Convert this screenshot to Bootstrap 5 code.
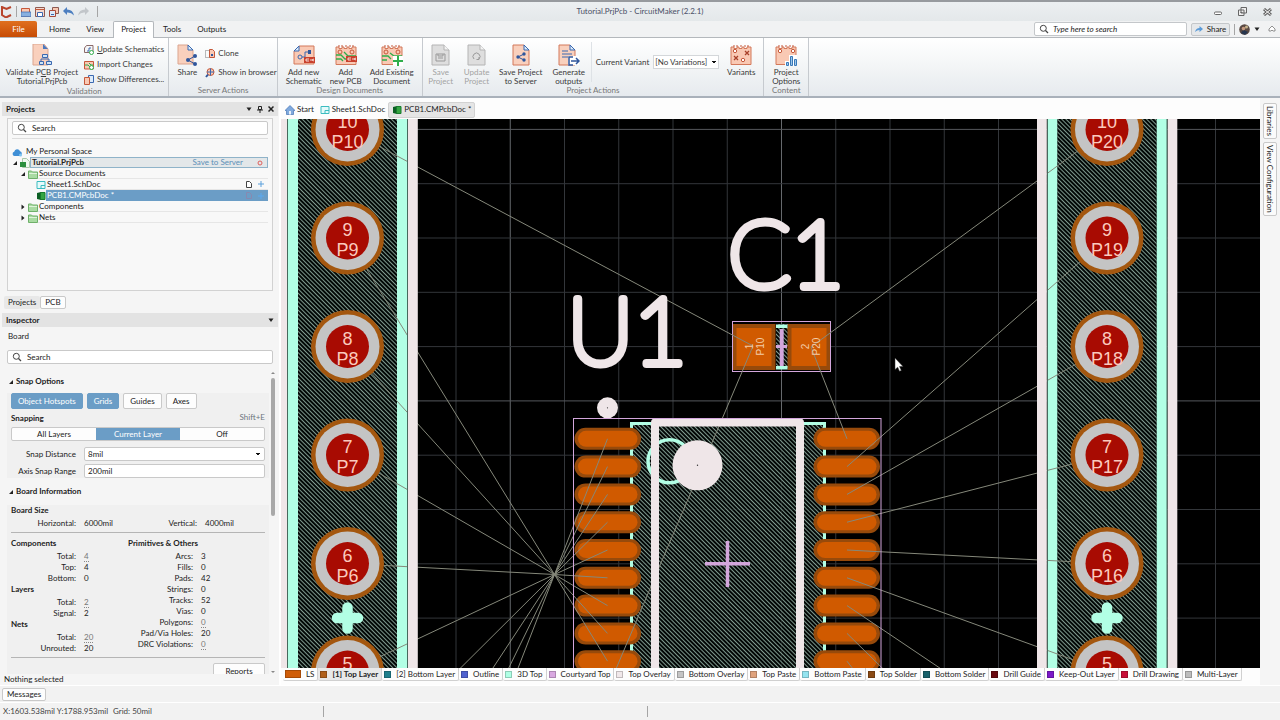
<!DOCTYPE html>
<html lang="en">
<head>
<meta charset="utf-8">
<meta name="viewport" content="width=device-width, initial-scale=1">
<title>Tutorial.PrjPcb - CircuitMaker (2.2.1)</title>
<link href="https://cdn.jsdelivr.net/npm/bootstrap@5.3.0/dist/css/bootstrap.min.css" rel="stylesheet">
<style>
  :root { --ink:#222; --blue:#6b9dc6; --line:#c9c9c9; --accent:#d2560a; }
  body { font-family:Lato,"Open Sans",sans-serif; font-size:8px; line-height:9px; color:var(--ink); background:#f4f4f4; white-space:nowrap; }
  button, input, select { font:inherit; color:inherit; border-radius:2px; }
  button { background:none; border:0; padding:0; }
  a { color:inherit; text-decoration:none; }
  svg { flex:none; }
  h2, h3, h4, p, ul { font-size:8px; line-height:11px; margin:0; padding:0; font-weight:700; }
  .i9 { width:10px; height:10px; } .i22 { width:22px; height:22px; }

  .title-bar { height:21px; background:linear-gradient(#eceff1,#e4e8ea); border-top:2px solid #979a9e; }
  .title-bar .caption { color:#4a4f66; }
  .menu-row { height:17px; background:#f1f2f3; border-bottom:1px solid #b4b8bc; }
  .menu-row .menu-tab { height:17px; padding:0 7px; margin-right:2px; }
  .menu-row .menu-tab.on { background:#fff; border:1px solid #b4b8bc; border-bottom:0; border-radius:2px 2px 0 0; }
  .file-tab { width:37px; height:16px; color:#fff; background:linear-gradient(#e0701f,#c74c05); border-radius:0 2px 0 0; margin-right:5px; }
  .find-box { width:153px; height:14px; border:1px solid #c4c7ca; background:#fff; border-radius:2px; }
  .find-box input, .field input { border:0; outline:0; background:transparent; padding:0; min-width:0; flex:1; }
  .field input::placeholder, .find-box input::placeholder { color:#222; opacity:1; }
  .share-btn { width:39px; height:13px; border:1px solid #c4c7ca; background:#e6e8ea; }

  .ribbon { height:60px; background:linear-gradient(#fff,#f4f6f7 45%,#e6eaee); border-bottom:2px solid #a9b1ba; }
  .ribbon-group { border-right:1px solid #c6cacf; color:#3a3a3a; }
  .ribbon-group footer { color:#777; height:10px; text-align:center; }
  .big-cmd { display:flex; flex-direction:column; align-items:center; padding-top:6px; gap:2px; }
  .cmd-gap { gap:2px; }
  .w36 { width:36px; } .w44 { width:44px; } .w52 { width:52px; } .w84 { width:84px; }
  .small-cmd { display:flex; align-items:center; gap:3px; height:15px; }
  .disabled-look { color:#a3a3a3; }
  .with-caret { background-image:linear-gradient(45deg,transparent 50%,#111 50%),linear-gradient(-45deg,transparent 50%,#111 50%); background-size:3px 3px; background-position:right 6px center,right 3px center; background-repeat:no-repeat; }
  .variant-box { width:66px; height:14px; border:1px solid #d4d7da; background-color:#fff; appearance:none; padding:0 1px; border-radius:0; background-size:2px 2px; background-position:right 4px center,right 2px center; }

  .side { width:281px; background:#f5f5f5; border-right:2px solid #fff; }
  .panel-head { height:14px; background:#e3e3e3; padding:0 4px; margin:0 1px 0 2px; gap:5px; flex:none; }
  .tree-box { border:1px solid #d2d2d2; height:173px; flex:none; margin:2px 6px 5px 7px; padding:2px 4px; background:#f8f8f8; }
  .field { height:14px; border:1px solid #c9c9c9; background-color:#fff; border-radius:2px; display:flex; align-items:center; gap:5px; padding:0 4px; }
  .field.inset { margin:0 6px 0 7px; }
  .tree-row { height:11px; display:flex; align-items:center; font-weight:400; }
  .tree-row .cell { flex:1; display:flex; align-items:center; height:11px; border-bottom:1px solid #e6e6e6; padding-left:1px; gap:6px; }
  .tree-row .cell.proj { background:#e3e7e9; border:1px solid #8fb3c9; }
  .tree-row .cell.picked { background:var(--blue); color:#fff; border:0; }
  .twig { width:6px; height:6px; margin-right:2px; }
  .page-tab { height:13px; padding:0 4px; border-radius:2px; }
  .page-tab.flat { background:#e8e8e8; }
  .page-tab.raised { border:1px solid var(--line); background:#fdfdfd; }

  .props { background:#f0f0f0; margin:0 10px 0 7px; padding:0 4px; }
  .sect { padding:12px 8px 6px; }
  .sect.tight { padding:5px 8px 8px; }
  .pill { height:16px; padding:0 6px; border:1px solid #c9c9c9; background:#fdfdfd; }
  .pill.on, .seg button.on { background:var(--blue); border-color:var(--blue); color:#fff; }
  .seg { border:1px solid #c9c9c9; border-radius:2px; background:#fdfdfd; height:14px; margin:3px 0 6px; }
  .seg button { flex:1; border-radius:0; }
  .prop-line { display:grid; grid-template-columns:65px 1fr; column-gap:8px; align-items:center; margin-bottom:3px; }
  .prop-line label { text-align:right; }
  .prop-line .field { padding:0 3px; width:100%; }
  select.field { appearance:none; }
  .stats { display:grid; grid-template-columns:65px 36px 1fr 60px; column-gap:8px; line-height:11px; padding-top:2px; }
  .stat-table { border-collapse:collapse; }
  .stat-table.drop { margin-top:2px; }
  .stat-table td, .stat-table th { padding:0; height:11px; line-height:11px; font-weight:400; }
  .stat-table th { text-align:right; width:73px; padding-right:8px; }
  .rule { border-top:1px solid #b5b5b5; margin:3px 0 5px; }
  .rule.faint { border-color:#ddd; margin-bottom:7px; }
  .dotted { border-bottom:1px dotted #888; color:#777; }
  .thumb { right:4px; width:4px; height:138px; background:#a9a9a9; border-radius:2px; }
  .arrow-mark { right:3px; width:6px; height:4px; }

  .doc-tabs { height:21px; flex:none; background:#fdfdfd; padding:2px 0 0 4px; }
  .doc-tab { height:16px; display:flex; align-items:center; gap:2px; padding:0 3px; }
  .doc-tab.on { background:#e5e5e5; border:1px solid #d2d2d2; border-radius:2px; }
  .board { background:#000; min-height:0; }
  .board svg { width:100%; height:100%; display:block; }
  .layer-tabs { height:17px; flex:none; background:#fdfdfd; padding-left:2px; }
  .layer { height:13px; display:flex; align-items:center; padding:0 3px 0 2px; gap:5px; border-right:1px solid #d0d0d0; border-bottom:1px solid #d0d0d0; border-radius:0 0 2px 2px; }
  .layer.on { background:#e9e9e9; font-weight:700; }
  .chip { width:7px; height:7px; border:1px solid #0003; }
  .chip.wide { width:16px; height:8px; }
  .edge { width:20px; background:#f5f5f5; padding:5px 3px 0; display:flex; flex-direction:column; gap:3px; }
  .edge button { writing-mode:vertical-rl; width:14px; padding:2px 0; border:1px solid #c9c9c9; background:#fbfbfb; line-height:12px; }
  .msg-row { height:18px; flex:none; padding-left:2px; background:#f2f2f2; border-bottom:1px solid #fff; border-top:1px solid #fff; }
  .status { height:17px; flex:none; padding-left:3px; background:#f2f2f2; color:#444; }
  .tick-mark { width:1px; height:11px; background:#a5a5a5; }
</style>
</head>
<body class="d-flex flex-column vh-100 overflow-hidden">

<svg width="0" height="0" class="position-absolute" aria-hidden="true">
  <defs>
    <symbol id="brd" viewBox="0 0 22 22"><path d="M1 3h3v1.500h3V3h2v1.500h3V3h2v1.500h3V3h4v17.500H1z" fill="#f9c9b4" stroke="#d3785a"/><path d="M4 1v2m3-2v2m4-2v2m4-2v2m3-2v2" stroke="#c5583a"/></symbol>
    <symbol id="validate" viewBox="0 0 22 22"><path d="M2 0h11l4 5v16H2z" fill="#f9d0bd" stroke="#dba58f"/><path d="M12 0v5h5z" fill="#4d79bd"/><path d="M14 14v-1m-4 4v-2h8v2" stroke="#3a68b0" fill="none"/><path d="M11.500 10.500h5v3h-5zM8.500 17.500h4v3h-4zM15.500 17.500h5v3h-5z" fill="#cfe4f7" stroke="#3a68b0"/></symbol>
    <symbol id="share" viewBox="0 0 22 22"><path d="M2 1h10l5 5v14H2z" fill="#f9d0bd" stroke="#dba58f"/><path d="M12 1v5h5z" fill="#dcebfa" stroke="#3a68b0"/><path d="m12 16 7-4m-7 4 7 4" stroke="#2f569c"/><circle cx="12" cy="16" r="2" fill="#2f569c"/><circle cx="19" cy="12" r="2" fill="#2f569c"/><circle cx="19" cy="20" r="2" fill="#2f569c"/></symbol>
    <symbol id="sch" viewBox="0 0 22 22"><path d="M6 2h15v18H1V7z" fill="#f9c9b4" stroke="#d3785a"/><path d="M1 7h5V2z" fill="#dcebfa" stroke="#3a68b0"/><circle cx="7" cy="13" r="2" fill="none" stroke="#3a68b0"/><path d="M9 13h3V8h3" fill="none" stroke="#3a68b0"/><path d="M15 6h3v4h-3z" fill="#2f569c"/><path d="M11 13h11v6H11z" fill="#c9402c"/><path d="M16 15h-3v2h3m2-2v2m3-2-2 1 2 1" stroke="#fff" stroke-width=".8" fill="none"/></symbol>
    <symbol id="pcb" viewBox="0 0 22 22"><use href="#brd"/><circle cx="5" cy="8" r="2" fill="none" stroke="#c5583a"/><circle cx="17" cy="8" r="2" fill="none" stroke="#c5583a"/><path d="M1 11h5l4 4h5m-14 0h5l2 2M9 8l4 4h8" fill="none" stroke="#2fae4b" stroke-width="1.300"/><path d="M11 12h11v6H11z" fill="#c9402c"/><path d="M16 14h-3v2h3m2-2v2m3-2-2 1 2 1" stroke="#fff" stroke-width=".8" fill="none"/></symbol>
    <symbol id="exist" viewBox="0 0 22 22"><use href="#brd"/><circle cx="5" cy="8" r="2" fill="none" stroke="#c5583a"/><circle cx="17" cy="8" r="2" fill="none" stroke="#c5583a"/><path d="M1 12h6l3 3m-9 1h5M9 9l4 3h8" fill="none" stroke="#2fae4b" stroke-width="1.300"/><path d="M12 12h10v10H12z" fill="#fff"/><path d="M17 12v10m-5-5h10" stroke="#2fae4b" stroke-width="2"/></symbol>
    <symbol id="gsave" viewBox="0 0 22 22"><path d="M2 1h12l5 5v15H2z" fill="#dedede" stroke="#b4b4b4"/><path d="M14 1v5h5" fill="#f3f3f3" stroke="#b4b4b4"/><path d="M6 10h9v7H6zm2 0v2h5v-2M8 14h5" fill="none" stroke="#999"/></symbol>
    <symbol id="gupd" viewBox="0 0 22 22"><path d="M2 1h12l5 5v15H2z" fill="#dedede" stroke="#b4b4b4"/><path d="M14 1v5h5" fill="#f3f3f3" stroke="#b4b4b4"/><path d="M8 15a3.500 3.500 0 1 1 5 0m0-2v2.500h-2.500" fill="none" stroke="#999"/></symbol>
    <symbol id="psrv" viewBox="0 0 22 22"><path d="M3 1h11l5 5v15H3z" fill="#f9d0bd" stroke="#d3785a"/><path d="M14 1v5h5z" fill="#dcebfa" stroke="#3a68b0"/><path d="m8 13 6-3m-6 3 6 3" stroke="#2f569c"/><circle cx="8" cy="13" r="1.700" fill="#2f569c"/><circle cx="14" cy="10" r="1.700" fill="#2f569c"/><circle cx="14" cy="16" r="1.700" fill="#2f569c"/></symbol>
    <symbol id="gen" viewBox="0 0 22 22"><path d="M1 1h11l5 5v15H1z" fill="#f9d0bd" stroke="#d3785a"/><path d="M12 1v5h5z" fill="#dcebfa" stroke="#3a68b0"/><path d="M4 7h6M4 10h10M4 13h6" stroke="#3a68b0"/><path d="M10 12h11v9H10z" fill="#fff"/><path d="M15 13h-4v8h4m-2-4h8m-3-3 3 3-3 3" fill="none" stroke="#2f569c" stroke-width="1.500"/></symbol>
    <symbol id="vars" viewBox="0 0 22 22"><use href="#brd"/><circle cx="5" cy="7" r="1.700" fill="#fff" stroke="#c5583a"/><circle cx="13" cy="16" r="1.700" fill="#fff" stroke="#c5583a"/><path d="m15 7 4 4m0-4-4 4M4 12l4 4m0-4-4 4" stroke="#a8412a" stroke-width="1.300"/></symbol>
    <symbol id="opts" viewBox="0 0 22 22"><use href="#brd"/><circle cx="5" cy="7" r="1.700" fill="#fff" stroke="#c5583a"/><circle cx="18" cy="7" r="1.700" fill="#fff" stroke="#c5583a"/><path d="M10 17h4v-6h8v11H10z" fill="#fff"/><path d="M11.500 18.500h2v3h-2zM15.500 12.500h2v9h-2zM19.500 15.500h2v6h-2z" fill="#9cc8ea" stroke="#3a78b8"/></symbol>
    <symbol id="upd" viewBox="0 0 10 10"><path d="M2.500.5H9v7H.5V3z" fill="#f6f6f6" stroke="#8a6a6a"/><path d="M3 6h2V3h2" stroke="#3a68b0" fill="none"/><circle cx="7.500" cy="7.500" r="2" fill="#fff" stroke="#2fae4b"/></symbol>
    <symbol id="imp" viewBox="0 0 10 10"><path d="M.5 1.500h9V9h-9z" fill="#f9c9b4" stroke="#c5583a"/><path d="M1 5h3l2 2M5 3l2 2h2" stroke="#2fae4b" fill="none"/><circle cx="7.500" cy="7.500" r="2" fill="#fff" stroke="#2fae4b"/></symbol>
    <symbol id="diff" viewBox="0 0 10 10"><path d="M4.500.5h5v7h-5z" fill="#dcebfa" stroke="#3a68b0"/><path d="M.5 2.500h5v7h-5z" fill="#f9c9b4" stroke="#c5583a"/></symbol>
    <symbol id="clone" viewBox="0 0 10 10"><path d="M.5 1.500h5v7h-5z" fill="none" stroke="#777" stroke-dasharray="1 1"/><path d="M4.500.5h3l2 2v6h-5z" fill="#f9c9b4" stroke="#c5583a"/><path d="M6 6h2" stroke="#2f569c" stroke-width="2"/></symbol>
    <symbol id="globe" viewBox="0 0 10 10"><circle cx="5.500" cy="4" r="3.500" fill="#f9c9b4" stroke="#c5583a"/><path d="M2 4h7M5.500.5v7" stroke="#3a68b0"/><path d="M3 6.500 1 9" stroke="#2f569c" stroke-width="2"/></symbol>
    <symbol id="lens" viewBox="0 0 10 10"><circle cx="4.300" cy="4.300" r="3" fill="none" stroke="#444"/><path d="m6.500 6.500 2.500 2.500" stroke="#444" stroke-width="1.300"/></symbol>
    <symbol id="schdoc" viewBox="0 0 10 10"><path d="M1 1.500h8v7H1z" fill="#e5fbfb" stroke="#3cbcc0"/><path d="M5 8.500v-3h4" fill="none" stroke="#3cbcc0"/></symbol>
    <symbol id="pcbdoc" viewBox="0 0 10 10"><path d="M1 2l4-1v8l-4-1z" fill="#0c5f24"/><path d="M4.500 1.500h4.500v7H4.500z" fill="#35a542" stroke="#177c2c"/></symbol>
    <symbol id="folder" viewBox="0 0 10 10"><path d="M.5 2h3l1 1h5v6.500h-9z" fill="#a9dba2" stroke="#6fb06a"/><path d="M1 4.500h8" stroke="#dff3da"/></symbol>
    <symbol id="cloud" viewBox="0 0 10 10"><path d="M2.500 9a2.200 2.200 0 0 1-.3-4.300A3 3 0 0 1 8 4.300 2.400 2.400 0 0 1 7.800 9z" fill="#3f8fd6"/><circle cx="8.500" cy="8" r="1.500" fill="#7fc4f0"/></symbol>
    <symbol id="prj" viewBox="0 0 10 10"><path d="M2.500.5h4l3 3v6h-7z" fill="#eef8ee" stroke="#a9c7a9"/><path d="M0 4h6v5H0z" fill="#2b8f3d"/></symbol>
    <symbol id="home" viewBox="0 0 10 10"><path d="M0 5.500 5 .5l5 5H8.500v4h-7v-4z" fill="#7fa9dd" stroke="#4574b4" stroke-width=".7"/><path d="M4 6h2v3.500H4z" fill="#e8f0fa"/></symbol>
    <symbol id="open" viewBox="0 0 6 6"><path d="M5 1v4H1z" fill="#222"/></symbol>
    <symbol id="shut" viewBox="0 0 6 6"><path d="M1.500.5 4.500 3l-3 2.500z" fill="#222"/></symbol>
    <symbol id="down" viewBox="0 0 6 6"><path d="M.5 1.500h5L3 5z" fill="#222"/></symbol>
  </defs>
</svg>

<header class="flex-shrink-0">
  <div class="title-bar position-relative d-flex align-items-center justify-content-center">
    <div class="position-absolute start-0 top-0 h-100 d-flex align-items-center gap-1">
      <svg width="12" height="12" viewBox="0 0 12 12"><path d="M11 1 6.500 3 2 1v8l4 2.500L11 9" fill="none" stroke="#b8442c" stroke-width="2"/></svg>
      <span class="tick-mark"></span>
      <svg class="i9" viewBox="0 0 10 10"><path d="M.5 1.500h8V9h-8z" fill="#f9c9b4" stroke="#c5583a"/><path d="M0 5h10v4.500H0z" fill="#88b0e0" stroke="#3a68b0" stroke-width=".7"/></svg>
      <svg class="i9" viewBox="0 0 10 10"><path d="M.5.5h9v9h-9z" fill="#f3d9d0" stroke="#8c5a52"/><path d="M0 2.500h10" stroke="#c5583a"/><path d="M2.500 5.500h5v4h-5z" fill="#fff" stroke="#3a68b0"/></svg>
      <svg class="i9" viewBox="0 0 10 10"><path d="M3.500.5h6v6h-6z" fill="#f9c9b4" stroke="#8c5a52"/><path d="M.5 3.500h6v6h-6z" fill="#dcebfa" stroke="#a84a3a"/><path d="M2 7.500h3" stroke="#3a68b0"/></svg>
      <svg width="11" height="9" viewBox="0 0 11 9"><path d="M0 4 4 0v2.500q6 0 7 6Q8 5 4 5.500V8z" fill="#4d7fc0"/></svg>
      <svg width="11" height="9" viewBox="0 0 11 9"><path d="M11 4 7 0v2.500q-6 0-7 6Q3 5 7 5.500V8z" fill="#c2c6ca"/></svg>
      <span class="tick-mark ms-1"></span>
    </div>
    <div class="caption">Tutorial.PrjPcb - CircuitMaker (2.2.1)</div>
    <div class="position-absolute end-0 top-0 h-100 d-flex align-items-center gap-3 pe-2">
      <button aria-label="Minimize"><svg width="8" height="8" viewBox="0 0 8 8"><rect x=".5" y="4" width="7" height="2.500" rx="1" fill="#fff" stroke="#666"/></svg></button>
      <button aria-label="Restore"><svg width="9" height="9" viewBox="0 0 9 9"><path d="M3 .5h5.500V6H3zM.5 3H6v5.500H.5z" fill="#eee" stroke="#666"/><path d="M2.500 5.500h2" stroke="#666"/></svg></button>
      <button aria-label="Close"><svg width="9" height="8" viewBox="0 0 9 8"><path d="m1 1 7 6m0-6L1 7" stroke="#666" stroke-width="3"/><path d="m1.500 1.500 6 5m0-5-6 5" stroke="#fff"/></svg></button>
    </div>
  </div>

  <nav class="menu-row d-flex align-items-center">
    <button class="file-tab">File</button>
    <button class="menu-tab">Home</button>
    <button class="menu-tab">View</button>
    <button class="menu-tab on">Project</button>
    <button class="menu-tab">Tools</button>
    <button class="menu-tab">Outputs</button>
    <label class="find-box ms-auto d-flex align-items-center gap-1 px-1"><svg class="i9"><use href="#lens"/></svg><input type="search" class="fst-italic" placeholder="Type here to search" aria-label="Type here to search"></label>
    <button class="share-btn ms-1 d-flex align-items-center justify-content-center gap-1"><svg width="8" height="7" viewBox="0 0 8 7"><path d="M8 3 4.500 0v2Q1 2 0 6q2-2 4.500-2v2z" fill="#5b9bd8"/></svg>Share</button>
    <span class="tick-mark mx-1"></span>
    <svg width="11" height="11" viewBox="0 0 11 11"><circle cx="5.500" cy="5.500" r="5.300" fill="#5a4a44"/><path d="M2 9q2-4 5-2l2 1-3 3z" fill="#27364f"/><circle cx="4.500" cy="4.500" r="1.800" fill="#c59a80"/><circle cx="7.500" cy="3" r="1.500" fill="#c8b68d"/></svg>
    <svg class="ms-1" width="6" height="6"><use href="#down"/></svg>
    <svg class="ms-2 me-1" width="8" height="8" viewBox="0 0 8 8"><path d="m1 4 3-3 3 3v2H5L4 5 3 6H1z" fill="#fff" stroke="#777" stroke-width=".8"/></svg>
  </nav>

  <div class="ribbon d-flex">
    <section class="ribbon-group d-flex flex-column">
      <div class="d-flex flex-fill">
        <button class="big-cmd w84"><svg class="i22"><use href="#validate"/></svg><span>Validate P<u>C</u>B Project<br>Tutorial.PrjPcb</span></button>
        <div class="pe-1 pt-1">
          <button class="small-cmd"><svg class="i9"><use href="#upd"/></svg><span><u>U</u>pdate Schematics</span></button>
          <button class="small-cmd"><svg class="i9"><use href="#imp"/></svg>Import Changes</button>
          <button class="small-cmd"><svg class="i9"><use href="#diff"/></svg>Show Differences...</button>
        </div>
      </div>
      <footer>Validation</footer>
    </section>
    <section class="ribbon-group d-flex flex-column">
      <div class="d-flex flex-fill">
        <button class="big-cmd w36"><svg class="i22"><use href="#share"/></svg>Share</button>
        <div class="pt-2 d-flex flex-column gap-1">
          <button class="small-cmd"><svg class="i9"><use href="#clone"/></svg>Clone</button>
          <button class="small-cmd"><svg class="i9"><use href="#globe"/></svg>Show in browser</button>
        </div>
      </div>
      <footer>Server Actions</footer>
    </section>
    <section class="ribbon-group d-flex flex-column">
      <div class="d-flex flex-fill px-1 cmd-gap">
        <button class="big-cmd w44"><svg class="i22"><use href="#sch"/></svg><span>Add new<br>Schematic</span></button>
        <button class="big-cmd w36"><svg class="i22"><use href="#pcb"/></svg><span>Add<br>new PCB</span></button>
        <button class="big-cmd w52"><svg class="i22"><use href="#exist"/></svg><span>Add Existing<br>Document</span></button>
      </div>
      <footer>Design Documents</footer>
    </section>
    <section class="ribbon-group d-flex flex-column">
      <div class="d-flex flex-fill">
        <button class="big-cmd w36 disabled-look" disabled><svg class="i22"><use href="#gsave"/></svg><span>Save<br>Project</span></button>
        <button class="big-cmd w36 disabled-look" disabled><svg class="i22"><use href="#gupd"/></svg><span>Update<br>Project</span></button>
        <button class="big-cmd w52"><svg class="i22"><use href="#psrv"/></svg><span>Save Project<br>to Server</span></button>
        <button class="big-cmd w44"><svg class="i22"><use href="#gen"/></svg><span>Generate<br>outputs</span></button>
        <div class="border-start my-1 ps-1 d-flex align-items-center gap-1">
          <label for="variant">Current Variant</label>
          <select id="variant" class="with-caret variant-box"><option>[No Variations]</option></select>
        </div>
        <button class="big-cmd w44"><svg class="i22"><use href="#vars"/></svg>Variants</button>
      </div>
      <footer>Project Actions</footer>
    </section>
    <section class="ribbon-group d-flex flex-column">
      <button class="big-cmd w44 flex-fill"><svg class="i22"><use href="#opts"/></svg><span>Project<br>Options</span></button>
      <footer>Content</footer>
    </section>
  </div>
</header>

<div class="d-flex flex-fill" style="min-height:0">
  <aside class="side d-flex flex-column pt-1 flex-shrink-0">
    <div class="panel-head d-flex align-items-center"><h2 class="me-auto">Projects</h2>
      <svg width="6" height="6"><use href="#down"/></svg>
      <svg width="6" height="7" viewBox="0 0 6 7"><path d="M1.500.5h3v3h-3zM0 4h6M3 4v3" fill="none" stroke="#222"/></svg>
      <svg width="6" height="6" viewBox="0 0 6 6"><path d="m.5.5 5 5m0-5-5 5" stroke="#222" stroke-width="1.500"/></svg>
    </div>
    <div class="tree-box">
      <label class="field"><svg class="i9"><use href="#lens"/></svg><input type="search" placeholder="Search" aria-label="Search projects"></label>
      <div class="rule faint"></div>
      <ul class="list-unstyled">
        <li class="tree-row"><svg class="i9 me-1"><use href="#cloud"/></svg>My Personal Space</li>
        <li class="tree-row"><svg class="twig"><use href="#open"/></svg><svg class="i9"><use href="#prj"/></svg><span class="cell proj"><b class="me-auto">Tutorial.PrjPcb</b><a href="#" style="color:#5c8fb8">Save to Server</a><svg class="ms-2 me-1" width="6" height="6"><circle cx="3" cy="3" r="2" fill="none" stroke="#e0605c"/></svg></span></li>
        <li class="tree-row ps-2"><svg class="twig"><use href="#open"/></svg><svg class="i9"><use href="#folder"/></svg><span class="cell">Source Documents</span></li>
        <li class="tree-row ps-4"><svg class="i9"><use href="#schdoc"/></svg><span class="cell"><span class="me-auto">Sheet1.SchDoc</span><svg width="6" height="7" viewBox="0 0 6 7"><path d="M.5.500h3l2 2v4h-5z" fill="#fff" stroke="#444"/></svg><svg class="me-1" width="6" height="6"><path d="M3 0v6M0 3h6" stroke="#5aa0dc"/></svg></span></li>
        <li class="tree-row ps-4"><svg class="i9"><use href="#pcbdoc"/></svg><span class="cell picked"><span class="me-auto">PCB1.CMPcbDoc *</span><svg width="6" height="7" viewBox="0 0 6 7"><path d="M.5.500h3l2 2v4h-5z" fill="none" stroke="#8789b0"/></svg><svg class="me-1" width="6" height="6"><path d="M3 0v6M0 3h6" stroke="#5aa9f0"/></svg></span></li>
        <li class="tree-row ps-2"><svg class="twig"><use href="#shut"/></svg><svg class="i9"><use href="#folder"/></svg><span class="cell">Components</span></li>
        <li class="tree-row ps-2"><svg class="twig"><use href="#shut"/></svg><svg class="i9"><use href="#folder"/></svg><span class="cell">Nets</span></li>
      </ul>
    </div>
    <div class="d-flex ps-1 pb-1"><button class="page-tab flat">Projects</button><button class="page-tab raised">PCB</button></div>

    <div class="panel-head d-flex align-items-center"><h2 class="me-auto">Inspector</h2><svg width="6" height="6"><use href="#down"/></svg></div>
    <div class="position-relative flex-fill overflow-hidden">
      <p class="fw-normal px-2 pt-1 mb-2">Board</p>
      <label class="field inset"><svg class="i9"><use href="#lens"/></svg><input type="search" placeholder="Search" aria-label="Search properties"></label>
      <svg class="arrow-mark position-absolute" style="top:44px" viewBox="0 0 6 4"><path d="m1 3 2-2 2 2" fill="#888"/></svg>
      <div class="thumb position-absolute" style="top:51px"></div>
      <h3 class="sect"><svg width="6" height="6"><use href="#open"/></svg> Snap Options</h3>
      <div class="props">
        <div class="d-flex gap-1">
          <button class="pill on">Object Hotspots</button><button class="pill on">Grids</button><button class="pill">Guides</button><button class="pill">Axes</button>
        </div>
        <div class="d-flex justify-content-between pt-1"><h4>Snapping</h4><span class="text-secondary">Shift+E</span></div>
        <div class="seg d-flex"><button>All Layers</button><button class="on">Current Layer</button><button>Off</button></div>
        <div class="prop-line"><label for="dist">Snap Distance</label><select id="dist" class="field with-caret"><option>8mil</option></select></div>
        <div class="prop-line"><label for="range">Axis Snap Range</label><span class="field"><input id="range" type="text" value="200mil"></span></div>
      </div>
      <h3 class="sect tight"><svg width="6" height="6"><use href="#open"/></svg> Board Information</h3>
      <div class="props">
        <h4>Board Size</h4>
        <div class="stats"><span class="text-end">Horizontal:</span><span>6000mil</span><span class="text-end">Vertical:</span><span>4000mil</span></div>
        <div class="rule"></div>
        <div class="d-flex">
          <div style="width:117px">
            <h4>Components</h4>
            <table class="stat-table drop"><tbody><tr><th>Total:</th><td><a href="#" class="dotted">4</a></td></tr><tr><th>Top:</th><td>4</td></tr><tr><th>Bottom:</th><td>0</td></tr></tbody></table>
            <h4>Layers</h4>
            <table class="stat-table drop"><tbody><tr><th>Total:</th><td><a href="#" class="dotted">2</a></td></tr><tr><th>Signal:</th><td>2</td></tr></tbody></table>
            <h4>Nets</h4>
            <table class="stat-table drop"><tbody><tr><th>Total:</th><td><a href="#" class="dotted">20</a></td></tr><tr><th>Unrouted:</th><td>20</td></tr></tbody></table>
          </div>
          <div>
            <h4>Primitives &amp; Others</h4>
            <table class="stat-table drop"><tbody>
              <tr><th>Arcs:</th><td>3</td></tr><tr><th>Fills:</th><td>0</td></tr><tr><th>Pads:</th><td>42</td></tr><tr><th>Strings:</th><td>0</td></tr><tr><th>Tracks:</th><td>52</td></tr><tr><th>Vias:</th><td>0</td></tr>
              <tr><th>Polygons:</th><td><a href="#" class="dotted">0</a></td></tr><tr><th>Pad/Via Holes:</th><td>20</td></tr><tr><th>DRC Violations:</th><td><a href="#" class="dotted">0</a></td></tr></tbody></table>
          </div>
        </div>
        <div class="rule"></div>
        <div class="d-flex justify-content-end"><button class="pill w52">Reports</button></div>
      </div>
      <svg class="arrow-mark position-absolute bottom-0" viewBox="0 0 6 4"><path d="m1 1 2 2 2-2" fill="#888"/></svg>
    </div>
    <p class="fw-normal ps-1">Nothing selected</p>
  </aside>

  <main class="d-flex flex-column flex-fill" style="min-width:0">
    <nav class="doc-tabs d-flex align-items-center">
      <a href="#" class="doc-tab ps-0"><svg class="i9"><use href="#home"/></svg>Start</a>
      <a href="#" class="doc-tab"><svg class="i9"><use href="#schdoc"/></svg>Sheet1.SchDoc</a>
      <a href="#" class="doc-tab on"><svg class="i9"><use href="#pcbdoc"/></svg>PCB1.CMPcbDoc *</a>
    </nav>
    <div class="board flex-fill overflow-hidden">
      <svg id="board" viewBox="281 119 979 549" preserveAspectRatio="xMidYMid slice" role="img" aria-label="PCB layout">
        <defs>
          <pattern id="hatch" width="3" height="3" patternUnits="userSpaceOnUse" patternTransform="rotate(-45)"><path d="M0 0h3v3H0z" fill="#020806" fill-opacity=".8"/><path d="M0 0h1v3H0z" fill="#7f9a8e"/></pattern>
        </defs>
      </svg>
    </div>
    <nav class="layer-tabs d-flex" id="layers"></nav>
  </main>
  <aside class="edge"><button>Libraries</button><button>View Configuration</button></aside>
</div>

<div class="msg-row d-flex align-items-center"><button class="page-tab raised">Messages</button></div>
<footer class="status d-flex align-items-center">
  <span style="width:110px">X:1603.538mil Y:1788.953mil</span><span style="width:210px">Grid: 50mil</span>
  <span class="tick-mark"></span><span style="width:323px"></span><span class="tick-mark"></span>
</footer>

<script>
const layers = [['LS','#cf5d08','wide'],['[1] Top Layer','#b0601c','on'],['[2] Bottom Layer','#1f7f8c'],['Outline','#4f62cf'],['3D Top','#b0ffe4'],['Courtyard Top','#d8a8e0'],['Top Overlay','#f0e8ea'],['Bottom Overlay','#c4c4c4'],['Top Paste','#dfa27c'],['Bottom Paste','#93e4f0'],['Top Solder','#8a4a14'],['Bottom Solder','#17606a'],['Drill Guide','#6a0a10'],['Keep-Out Layer','#7a18c8'],['Drill Drawing','#c80f38'],['Multi-Layer','#bdbdbd']];
document.getElementById('layers').innerHTML = layers.map(([name, colour, kind = '']) =>
  `<button class="layer ${kind === 'on' ? 'on' : ''}"><span class="chip ${kind}" style="background:${colour}"></span>${name}</button>`).join('');

const pink = '#efe6e8', mint = '#b2ffe5', violet = '#d3a6dc', wire = '#85887a', out = [];
const rect = (x, y, w, h, extra) => out.push(`<rect x="${x}" y="${y}" width="${w}" height="${h}" ${extra}/>`);
const line = (x1, y1, x2, y2, extra) => out.push(`<path d="M${x1} ${y1}L${x2} ${y2}" ${extra}/>`);
const disc = (x, y, r, extra) => out.push(`<circle cx="${x}" cy="${y}" r="${r}" ${extra}/>`);
const air = (x1, y1, x2, y2) => line(x1, y1, x2, y2, `stroke="${wire}"`);
const rowY = n => 129.5 + (10 - n) * 108.5;
const smdY = n => 438.8 + (n - 1) * 27.8;

/* grid */
for (let i = -9; i < 9; i++) { const x = 781.5 + 54.25 * i; line(x, 119, x, 668, `stroke="${i % 5 ? '#33363a' : '#66696d'}"`); }
for (let j = 0; j < 11; j++) { const y = 129.4 + 54.3 * j; line(281, y, 1260, y, `stroke="${j % 5 ? '#33363a' : '#55585c'}"`); }

/* header strips */
for (const x of [288, 1047.5]) {
  rect(x, 119, 119.5, 549, `fill="${mint}"`);
  rect(x + 10, 119, 99, 549, 'fill="#020806"');
  rect(x + 10, 119, 99, 549, 'fill="url(#hatch)"');
}
/* U1 body */
rect(631.5, 423.5, 193, 260, `fill="url(#hatch)" stroke="${mint}" stroke-width="3"`);
/* smd pads */
for (let n = 1; n < 11; n++) for (const x of [574.5, 813.5]) {
  rect(x, smdY(n) - 11, 66.5, 22, 'rx="11" fill="#974a0b"');
  rect(x + 3.5, smdY(n) - 8, 59.5, 16, 'rx="8" fill="#d05a00"');
}
/* C1 */
rect(776, 324, 12, 45, 'fill="url(#hatch)"');
for (const x of [732.5, 787.5]) { rect(x, 324, 43, 46, 'fill="#974a0b"'); rect(x + 4, 328, 35, 38, 'fill="#d05a00"'); }
rect(776, 324.500, 11.5, 3.500, `fill="${mint}"`); rect(776, 366, 11.5, 3.500, `fill="${mint}"`);
line(781.7, 329, 781.7, 366, `stroke="${violet}" stroke-width="4"`);
line(776, 346.500, 787, 346.500, `stroke="${violet}" stroke-width="3"`);
rect(732.500, 321.500, 98, 50, `fill="none" stroke="${violet}"`);

/* connection lines */
for (let n = 1; n < 10; n++) { air(347.5, rowY(n), 554.5, 574.5); air(607.5, smdY(n), 554.5, 574.5); }
air(347.5, rowY(10), 753, 346); air(753, 346, 607.5, smdY(10));
air(1107, rowY(10), 811, 347); air(811, 347, 847, smdY(1));
for (let n = 2; n < 10; n++) air(847, smdY(n), 1107, rowY(11 - n));

/* overlay */
for (const x of [277.500, 408, 1037, 1167.500]) rect(x, 119, 9.800, 549, `fill="${pink}"`);
for (const x of [287.500, 407.500, 1047.500, 1167]) line(x, 119, x, 668, 'stroke="#46685c"');
disc(669.5, 461.3, 21.5, `fill="none" stroke="${mint}" stroke-width="3.500"`);
out.push(`<path d="M655 680V422.500H800V680" fill="none" stroke="${pink}" stroke-width="8" stroke-linejoin="round"/>`);
disc(697.5, 465.3, 25, `fill="${pink}"`); disc(697.5, 465.3, .7, 'fill="#333"');
disc(607.5, 407.8, 10.5, `fill="${pink}"`); disc(607.5, 407.8, .6, 'fill="#333"');
rect(573.5, 418.5, 307.5, 270, `fill="none" stroke="${violet}"`);
out.push(`<path d="M727.500 541v46M705 563.700h45" stroke="${violet}" stroke-width="3.500"/>`);

/* through-hole pads */
for (const [cx, base] of [[347.5, 0], [1107, 10]]) {
  for (let n = 5; n < 11; n++) {
    const y = rowY(n);
    disc(cx, y, 36.5, 'fill="#a4570f"'); disc(cx, y, 32, 'fill="#c4c4c4"'); disc(cx, y, 21.5, 'fill="#a80b02"');
    out.push(`<text x="${cx}" y="${y - 2}" class="pin">${n}</text>`);
    if (n > 5) out.push(`<text x="${cx}" y="${y + 18}" class="pin">P${n + base}</text>`);
  }
  out.push(`<path d="M${cx} 607.500v21M${cx - 10.5} 618h21" stroke="${mint}" stroke-width="10.500" stroke-linecap="round"/>`);
}
/* designators and pad names */
out.push(`<g font-family="Lato, sans-serif" font-weight="100" font-size="92" text-anchor="middle" fill="${pink}" stroke="${pink}" stroke-width="8" stroke-linejoin="round"><text x="786" y="287">C1</text><text x="627" y="364">U1</text></g>`);
for (const [x, s] of [[753, '1'], [764, 'P10'], [809, '2'], [820, 'P20']])
  out.push(`<text transform="translate(${x} 346.500) rotate(-90)" font-family="Liberation Sans, sans-serif" font-size="10" text-anchor="middle" fill="#f3cba6">${s}</text>`);
/* pointer */
out.push('<path d="M895 358v11.500l2.700-2.300 1.800 4 1.800-.8-1.800-3.900h3.500z" fill="#fff" stroke="#333" stroke-width=".5"/>');

const board = document.getElementById('board');
board.insertAdjacentHTML('beforeend', '<style>.pin{font:18px "Liberation Sans",sans-serif;text-anchor:middle;fill:#fbc9bd}</style>' + out.join(''));
</script>
<script src="https://cdn.jsdelivr.net/npm/bootstrap@5.3.0/dist/js/bootstrap.bundle.min.js"></script>
</body>
</html>
